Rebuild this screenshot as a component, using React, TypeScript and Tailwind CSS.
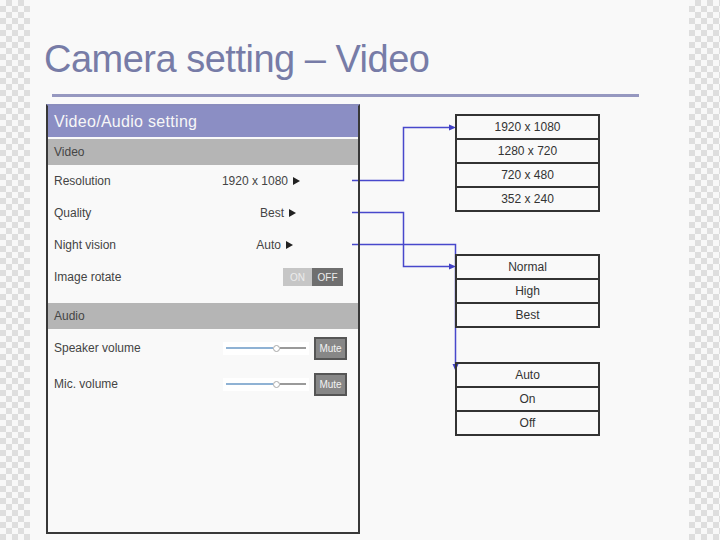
import React from "react";

const font = { fontFamily: '"Liberation Sans", Arial, sans-serif' };

function Tri() {
  return (
    <svg width="7" height="8" viewBox="0 0 7 8" className="ml-[5px]">
      <polygon points="0,0 7,4 0,8" fill="#222" />
    </svg>
  );
}

function ValueRow({ label, value, pr }: { label: string; value: string; pr: string }) {
  return (
    <div className="flex h-[32px] items-center justify-between pl-[6px]">
      <span>{label}</span>
      <span className={`flex items-center ${pr}`}>
        {value}
        <Tri />
      </span>
    </div>
  );
}

function Bar({ label }: { label: string }) {
  return (
    <div className="flex h-[26px] items-center bg-[#b5b5b5] pl-[6px] text-[#454545]">
      {label}
    </div>
  );
}

function VolumeRow({ label }: { label: string }) {
  return (
    <div className="flex h-[36px] items-center justify-between pl-[6px] pr-[11px]">
      <span>{label}</span>
      <div className="flex items-center gap-[5px]">
        <div className="flex h-[13px] w-[86px] items-center bg-white px-[3px]">
          <div className="h-[2px] w-[47px] bg-[#8fb2d4]" />
          <div className="h-[7px] w-[7px] rounded-full border border-[#a8a8a8] bg-white" />
          <div className="h-[2px] flex-1 bg-[#9a9a9a]" />
        </div>
        <div className="flex h-[23px] w-[33px] items-center justify-center border-2 border-[#555] bg-[#878787] text-[10px] text-[#f2f2f2]">
          Mute
        </div>
      </div>
    </div>
  );
}

function List({ items, className }: { items: string[]; className?: string }) {
  return (
    <div className={`w-[145px] border-2 border-[#333] ${className ?? ""}`}>
      {items.map((t, i) => (
        <div
          key={t}
          className={`flex items-center justify-center text-[#333] ${i > 0 ? "h-[24px] border-t-2 border-[#333]" : "h-[22px]"}`}
        >
          {t}
        </div>
      ))}
    </div>
  );
}

const checker =
  "bg-[conic-gradient(#dedede_25%,#f8f8f8_0_50%,#dedede_0_75%,#f8f8f8_0)] bg-[length:12px_12px]";

export default function App() {
  return (
    <div className="flex h-[540px] w-[720px] overflow-hidden text-[12px]" style={font}>
      <div className={`w-[30px] shrink-0 ${checker}`} />
      <div className="relative w-[659px] shrink-0 bg-[#f9f9f9]">
        <svg
          className="absolute left-0 top-0"
          width="659"
          height="540"
          viewBox="30 0 659 540"
        >
          <g fill="none" stroke="#4848cc" strokeWidth="1.5">
            <path d="M352 180.5 H403.5 V127.5 H450" />
            <path d="M352 212.5 H403.5 V266.5 H450" />
            <path d="M352 244.5 H455.5 V366" />
          </g>
          <g fill="#4040c4">
            <polygon points="449,124.5 456,127.5 449,130.5" />
            <polygon points="449,263.5 456,266.5 449,269.5" />
            <polygon points="452.5,364 455.5,371 458.5,364" />
          </g>
        </svg>

        <div className="relative">
          <h1 className="ml-[14px] pt-[37px] text-[38px] leading-[44px] tracking-[-0.5px] text-[#777ca7]">
            Camera setting – Video
          </h1>
          <div className="ml-[22px] mt-[13px] h-[3px] w-[587px] bg-[#9698c0]" />

          <div className="mt-[7px] flex">
            <div className="ml-[16px] flex h-[430px] w-[314px] flex-col border-2 border-[#383838] border-t-[#8a8dbd] text-[#444]">
              <div className="flex h-[31px] items-center bg-[#8b8ec4] pl-[6px] text-[16px] tracking-[0.3px] text-[#f7f7f7]">
                Video/Audio setting
              </div>
              <div className="mt-[2px]">
                <Bar label="Video" />
              </div>
              <ValueRow label="Resolution" value="1920 x 1080" pr="pr-[58px]" />
              <ValueRow label="Quality" value="Best" pr="pr-[62px]" />
              <ValueRow label="Night vision" value="Auto" pr="pr-[65px]" />
              <div className="flex h-[32px] items-center justify-between pl-[6px] pr-[15px]">
                <span>Image rotate</span>
                <div className="flex h-[18px] text-[10px]">
                  <div className="flex w-[29px] items-center justify-center bg-[#c6c6c6] text-[#ececec]">
                    ON
                  </div>
                  <div className="flex w-[31px] items-center justify-center bg-[#6f6f6f] text-[#ececec]">
                    OFF
                  </div>
                </div>
              </div>
              <div className="mt-[10px]">
                <Bar label="Audio" />
              </div>
              <div className="mt-[1px]">
                <VolumeRow label="Speaker volume" />
                <VolumeRow label="Mic. volume" />
              </div>
            </div>

            <div className="ml-[95px] flex flex-col">
              <List className="mt-[10px]" items={["1920 x 1080", "1280 x 720", "720 x 480", "352 x 240"]} />
              <List className="mt-[42px]" items={["Normal", "High", "Best"]} />
              <List className="mt-[34px]" items={["Auto", "On", "Off"]} />
            </div>
          </div>
        </div>
      </div>
      <div className={`w-[31px] shrink-0 ${checker}`} />
    </div>
  );
}
